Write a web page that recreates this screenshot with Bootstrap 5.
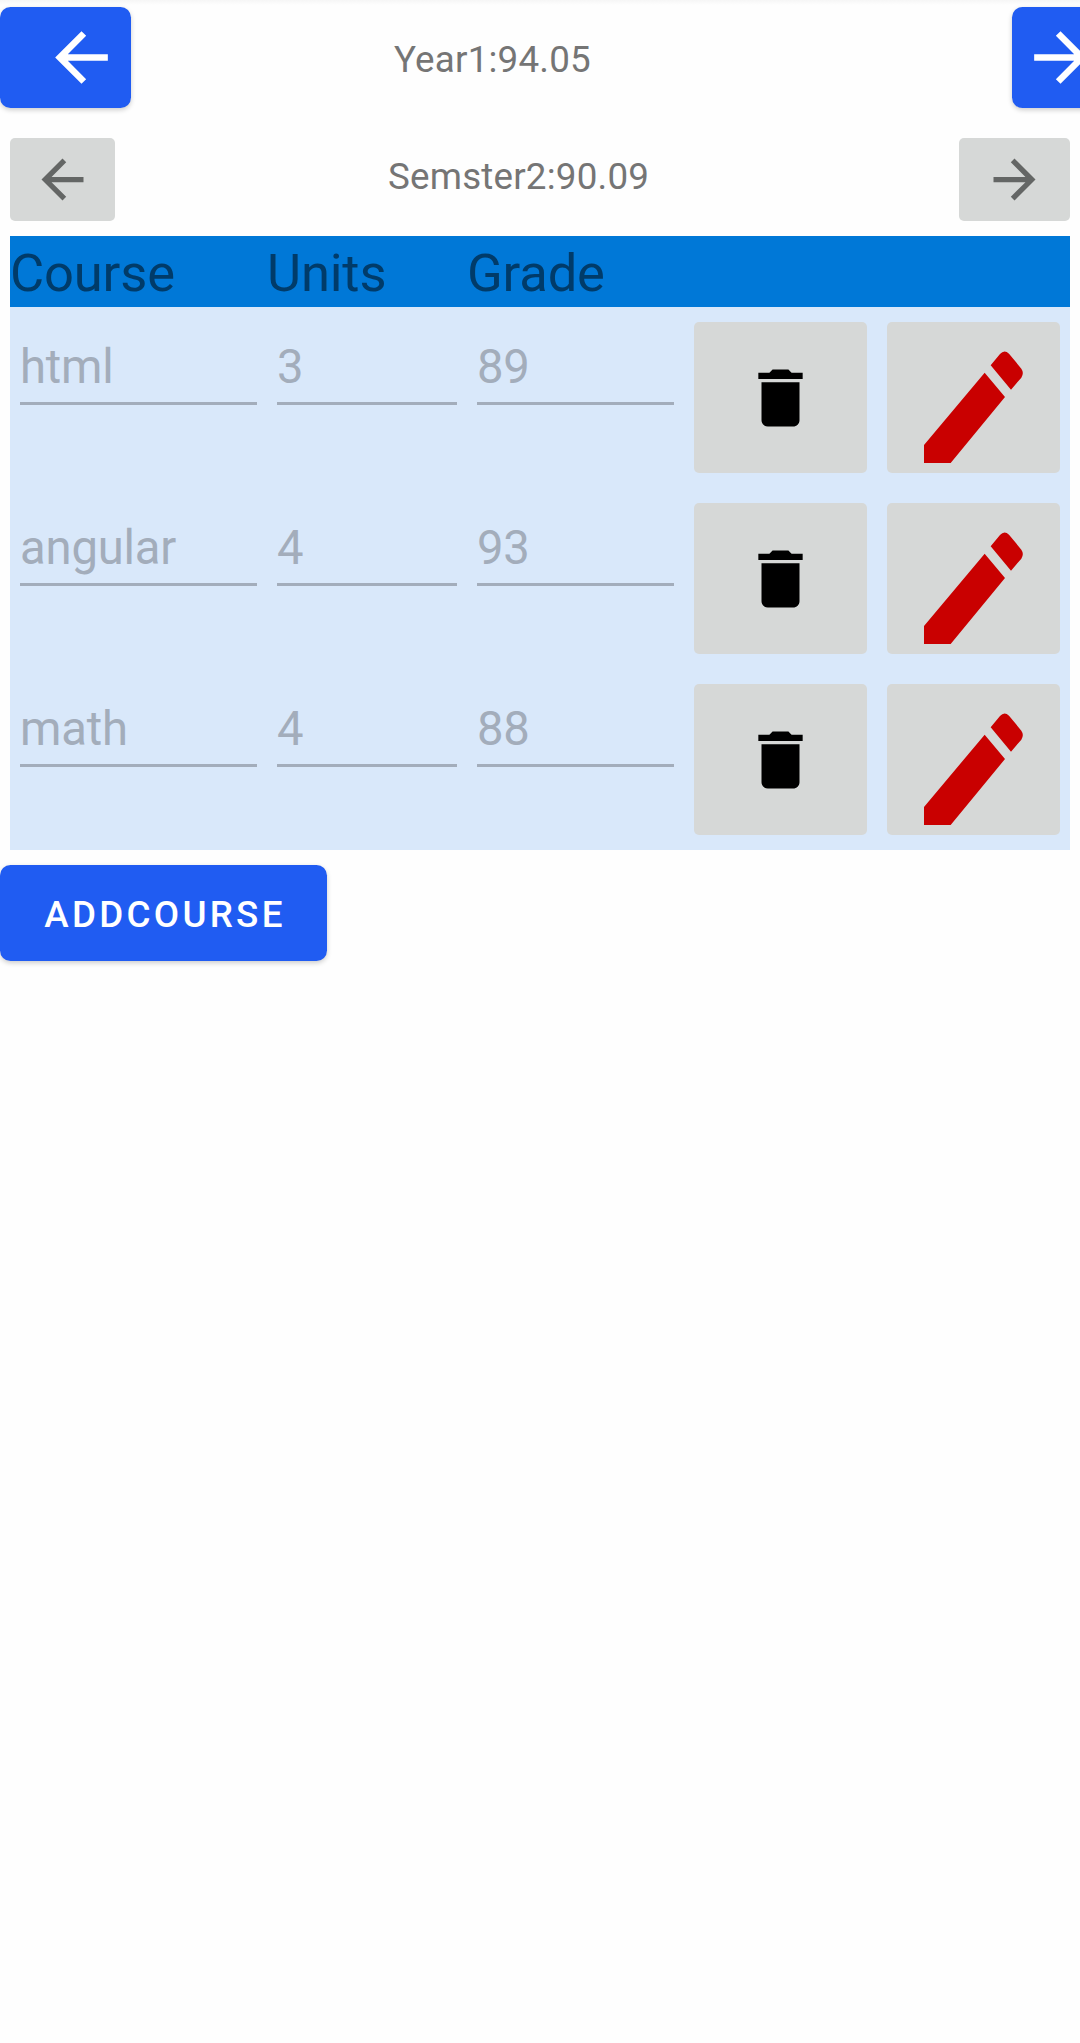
<!DOCTYPE html>
<html lang="en">
<head>
<meta charset="utf-8">
<meta name="viewport" content="width=device-width, initial-scale=1">
<title>Grades</title>
<link href="https://cdn.jsdelivr.net/npm/bootstrap@5.3.0/dist/css/bootstrap.min.css" rel="stylesheet">
<style>
body{font-family:Roboto,"Noto Sans",sans-serif;background:#fefefe;color:#757575;font-size:36.75px;line-height:43px;overflow-x:hidden}
.screen{width:1080px;min-height:2043px;padding-top:7px;overflow:hidden;background:linear-gradient(#f6f6f6,#fefefe 5px)}
.btn-main{--bs-btn-bg:#205cf2;--bs-btn-color:#fff;--bs-btn-hover-bg:#1a50d8;--bs-btn-hover-color:#fff;border:0;border-radius:10.5px;box-shadow:0 2px 5px rgba(0,0,0,.2)}
.btn-soft{--bs-btn-bg:#d6d8d7;--bs-btn-color:#646665;--bs-btn-hover-bg:#c8caca;border:0;border-radius:5px}
svg{display:block;fill:currentColor;flex:none}
.year-bar{height:101px}
.year-prev{width:131px;padding:0 0 0 42px}
.year-next{width:131px;padding:0 0 0 9px;margin-right:-63px}
.year-prev svg,.year-next svg{width:79px;height:79px}
.year-text{padding-left:263px;padding-top:3px;letter-spacing:.2px}
.term-bar{height:83px;margin:30px 10px 15px}
.term-prev{width:105px}
.term-next{width:111px}
.term-bar svg{width:63px;height:63px}
.term-text{padding-left:273px;padding-bottom:6px;letter-spacing:.2px}
.grades{margin:0 10px;background:#d9e8fa}
.grades-head{height:71px;background:#0078d7;color:#003b69;font-size:52.5px;line-height:71px;padding-top:2px;letter-spacing:-.15px}
.c-course{width:257px}.c-units{width:200px}.c-grade{width:217px}
.grade-row{height:181px;padding:15px 10px;gap:20px;color:#a3adbb;font-size:47.25px;line-height:56px;letter-spacing:-.2px}
.field{height:83px;padding-top:17px;border-bottom:3px solid #a3adbb}
.f-course{width:237px}.f-units{width:180px}.f-grade{width:197px}
.act{width:173px;height:151px}
.bin{color:#000;width:77px;height:76px}
.pen{color:#c90000;width:99px;height:112px;margin:19px 0 0 0}
.btn-add{width:327px;height:96px;margin-top:15px;font-size:36.75px;font-weight:500;letter-spacing:3.28px;line-height:43px;padding:2px 0 0 3px}
</style>
</head>
<body>
<svg class="d-none">
  <symbol id="back" viewBox="0 0 24 24"><path d="M20 11H7.83l5.59-5.59L12 4l-8 8 8 8 1.41-1.41L7.83 13H20z"/></symbol>
  <symbol id="next" viewBox="0 0 24 24"><path d="M12 4l-1.41 1.41L16.17 11H4v2h12.17l-5.58 5.59L12 20l8-8z"/></symbol>
  <symbol id="bin" viewBox="0 0 24 24"><path d="M6 19c0 1.1.9 2 2 2h8c1.1 0 2-.9 2-2V7H6zM19 4h-3.5l-1-1h-5l-1 1H5v2h14z"/></symbol>
  <symbol id="pen" viewBox="0 0 297 336"><path d="M0 282V336H80L243 138 182 65ZM200 43 228 9Q241-6 255 8L292 53Q301 66 292 80L261 116Z"/></symbol>
</svg>
<main class="screen">
  <div class="year-bar d-flex align-items-center">
    <button class="btn btn-main year-prev h-100 d-flex align-items-center" aria-label="Previous year"><svg><use href="#back"/></svg></button>
    <div class="year-text flex-grow-1">Year1:94.05</div>
    <button class="btn btn-main year-next h-100 d-flex align-items-center" aria-label="Next year"><svg><use href="#next"/></svg></button>
  </div>
  <div class="term-bar d-flex align-items-center">
    <button class="btn btn-soft term-prev h-100 p-0 d-flex align-items-center justify-content-center" aria-label="Previous semester"><svg><use href="#back"/></svg></button>
    <div class="term-text flex-grow-1">Semster2:90.09</div>
    <button class="btn btn-soft term-next h-100 p-0 d-flex align-items-center justify-content-center" aria-label="Next semester"><svg><use href="#next"/></svg></button>
  </div>
  <section class="grades">
    <div class="grades-head d-flex"><div class="c-course">Course</div><div class="c-units">Units</div><div class="c-grade">Grade</div></div>
    <div class="grade-row d-flex">
      <div class="field f-course">html</div><div class="field f-units">3</div><div class="field f-grade">89</div>
      <button class="btn btn-soft act p-0 d-flex align-items-center justify-content-center" aria-label="Delete"><svg class="bin"><use href="#bin"/></svg></button>
      <button class="btn btn-soft act p-0 d-flex align-items-center justify-content-center" aria-label="Edit"><svg class="pen"><use href="#pen"/></svg></button>
    </div>
    <div class="grade-row d-flex">
      <div class="field f-course">angular</div><div class="field f-units">4</div><div class="field f-grade">93</div>
      <button class="btn btn-soft act p-0 d-flex align-items-center justify-content-center" aria-label="Delete"><svg class="bin"><use href="#bin"/></svg></button>
      <button class="btn btn-soft act p-0 d-flex align-items-center justify-content-center" aria-label="Edit"><svg class="pen"><use href="#pen"/></svg></button>
    </div>
    <div class="grade-row d-flex">
      <div class="field f-course">math</div><div class="field f-units">4</div><div class="field f-grade">88</div>
      <button class="btn btn-soft act p-0 d-flex align-items-center justify-content-center" aria-label="Delete"><svg class="bin"><use href="#bin"/></svg></button>
      <button class="btn btn-soft act p-0 d-flex align-items-center justify-content-center" aria-label="Edit"><svg class="pen"><use href="#pen"/></svg></button>
    </div>
  </section>
  <button class="btn btn-main btn-add">ADDCOURSE</button>
</main>
<script src="https://cdn.jsdelivr.net/npm/bootstrap@5.3.0/dist/js/bootstrap.bundle.min.js"></script>
</body>
</html>
